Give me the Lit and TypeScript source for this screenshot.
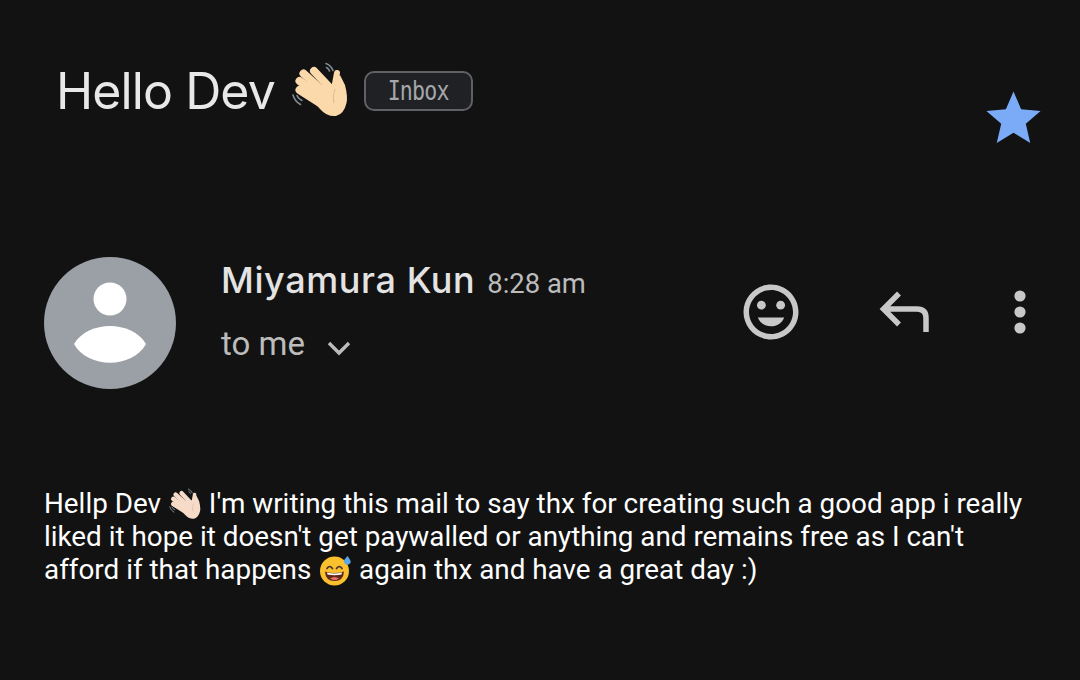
import { LitElement, html, css, svg } from "lit";
import { customElement } from "lit/decorators.js";

const hand = (skin: string, crease: string, wave: string) => svg`
  <g fill="none" stroke-linecap="round">
    <path d="M36 3.5 Q41 5.5 43 10.5" stroke="${wave}" stroke-width="1.6"/>
    <path d="M36.5 7.5 Q38.5 8.5 39.5 11" stroke="${wave}" stroke-width="1.6"/>
    <path d="M3 35 Q4.5 41 10.5 44.5" stroke="${wave}" stroke-width="1.6"/>
    <path d="M7 35.5 Q8 38.5 12 40.5" stroke="${wave}" stroke-width="1.6"/>
    <g stroke="${skin}" stroke-width="8">
      <path d="M24 11 L41 29"/>
      <path d="M13.5 13.5 L36 34"/>
      <path d="M9.5 21 L32 38"/>
      <path d="M9.5 30 L30 43"/>
      <path d="M47 13 L44 29" stroke-width="6"/>
    </g>
  </g>
  <path d="M26 26 L42 24 L50 15 L55 25 Q58 37 56.5 43 Q54 54 46 56 Q37 57 30 49 L22 40 Z" fill="${skin}"/>
  <path d="M45 29 Q42 36 44 43" fill="none" stroke="${crease}" stroke-width="1"/>
`;

@customElement("app-root")
export class AppRoot extends LitElement {
  static styles = css`
    :host {
      display: block;
      width: 1080px;
      height: 680px;
      background: #121212;
      overflow: hidden;
      font-family: Roboto, sans-serif;
      color: #fff;
    }
    .head {
      display: flex;
      align-items: flex-start;
      padding: 60px 34px 0 56px;
      height: 257px;
      box-sizing: border-box;
    }
    h1 {
      margin: 0;
      font: 400 50px/62px Inter, sans-serif;
      letter-spacing: -0.9px;
      color: #e8e8e8;
    }
    .wave {
      width: 60px;
      height: 60px;
      margin: 0 14px 0 15px;
      flex: none;
    }
    .badge {
      margin-top: 11px;
      width: 109px;
      height: 40px;
      box-sizing: border-box;
      border: 2px solid #5f6165;
      border-radius: 10px;
      background: #202124;
      display: flex;
      align-items: center;
      justify-content: center;
    }
    .badge span {
      display: block;
      color: #a5a7aa;
      font: 400 27px/34px "DejaVu Sans Mono", monospace;
      letter-spacing: -1px;
      transform: scaleX(0.8);
    }
    .star {
      margin: 26px 0 0 auto;
      width: 65px;
      height: 65px;
      flex: none;
    }
    .sender {
      display: flex;
      align-items: flex-start;
      padding: 0 50px 0 44px;
      height: 230px;
      box-sizing: border-box;
    }
    .avatar {
      width: 132px;
      height: 132px;
      flex: none;
    }
    .who {
      margin: 0 0 0 45px;
      flex: 1;
    }
    .line1 {
      display: flex;
      align-items: baseline;
      gap: 12px;
      height: 46px;
    }
    .name {
      font: 500 36px/46px Inter, sans-serif;
      letter-spacing: 0.6px;
      color: #e3e3e3;
    }
    .time {
      font: 400 27.4px/46px Roboto, sans-serif;
      color: #bcbcbc;
    }
    .line2 {
      display: flex;
      align-items: center;
      height: 40px;
      margin-top: 21px;
      color: #bcbcbc;
      font: 400 33px/40px Roboto, sans-serif;
    }
    .chev {
      width: 36px;
      height: 36px;
      margin: 6px 0 0 16px;
    }
    .actions {
      display: flex;
      align-items: flex-start;
      margin-top: 22px;
    }
    .actions svg {
      display: block;
      flex: none;
    }
    .smile { width: 66px; height: 66px; }
    .reply { width: 60px; height: 66px; margin-left: 74px; }
    .dots { width: 20px; height: 66px; margin-left: 72px; }
    .body {
      margin: 0;
      padding: 0 44px;
      font: 400 27.83px/33px Roboto, sans-serif;
      color: #fff;
    }
    .emo {
      display: inline-block;
      width: 34px;
      height: 34px;
      margin: -6px 0;
      vertical-align: -2px;
    }
  `;

  render() {
    return html`
      <div class="head">
        <h1>Hello Dev</h1>
        <svg class="wave" viewBox="0 0 60 60" role="img" aria-label="👋">
          ${hand("#fbd9ab", "#e3b988", "#7f8a92")}
        </svg>
        <div class="badge"><span>Inbox</span></div>
        <svg class="star" viewBox="0 0 24 24">
          <path fill="#7baaf7" d="M12 17.27L18.18 21l-1.64-7.03L22 9.24l-7.19-.61L12 2 9.19 8.63 2 9.24l5.46 4.73L5.82 21z"/>
        </svg>
      </div>
      <div class="sender">
        <svg class="avatar" viewBox="0 0 132 132">
          <circle cx="66" cy="66" r="66" fill="#9aa0a6"/>
          <circle cx="66" cy="42" r="16.5" fill="#fff"/>
          <path d="M30 87 C44 63 88 63 102 87 C88 112 44 112 30 87Z" fill="#fff"/>
        </svg>
        <div class="who">
          <div class="line1">
            <span class="name">Miyamura Kun</span>
            <span class="time">8:28 am</span>
          </div>
          <div class="line2">
            <span>to me</span>
            <svg class="chev" viewBox="0 0 36 36">
              <path d="M8 14 L18 24 L28 14" fill="none" stroke="#bcbcbc" stroke-width="3.4"/>
            </svg>
          </div>
        </div>
        <div class="actions">
          <svg class="smile" viewBox="0 0 24 24">
            <path fill="#c8c8c8" d="M11.99 2C6.47 2 2 6.48 2 12s4.47 10 9.99 10C17.52 22 22 17.52 22 12S17.52 2 11.99 2zM12 20c-4.42 0-8-3.58-8-8s3.58-8 8-8 8 3.58 8 8-3.58 8-8 8z"/>
            <circle cx="8.5" cy="9.5" r="1.6" fill="#c8c8c8"/>
            <circle cx="15.5" cy="9.5" r="1.6" fill="#c8c8c8"/>
            <path fill="#c8c8c8" d="M7.2 14h9.6c-.8 2-2.6 3.2-4.8 3.2S8 16 7.2 14z"/>
          </svg>
          <svg class="reply" viewBox="0 0 60 66">
            <path d="M21 14.5 L5.5 30 L21 45.5 M5.5 30 H39 Q48 30 48 39 V53" fill="none" stroke="#c8c8c8" stroke-width="5.5"/>
          </svg>
          <svg class="dots" viewBox="0 0 20 66">
            <circle cx="10" cy="17" r="5.6" fill="#c8c8c8"/>
            <circle cx="10" cy="33" r="5.6" fill="#c8c8c8"/>
            <circle cx="10" cy="49" r="5.6" fill="#c8c8c8"/>
          </svg>
        </div>
      </div>
      <p class="body">Hellp Dev <svg class="emo" viewBox="0 0 60 60" role="img" aria-label="👋">${hand("#f6dcc8", "#d9b99f", "#8b949b")}</svg> I'm writing this mail to say thx for creating such a good app i really liked it hope it doesn't get paywalled or anything and remains free as I can't afford if that happens <svg class="emo" viewBox="0 0 34 34" role="img" aria-label="😅">
          <circle cx="16.5" cy="18" r="14.5" fill="#fbc02d"/>
          <path d="M9 15.5 Q11.5 11.5 14.5 15.5 M18.5 15.5 Q21.5 11.5 24 15.5" fill="none" stroke="#4e342e" stroke-width="1.7" stroke-linecap="round"/>
          <path d="M7 18.5 Q16.5 21.5 26 18.5 Q25.5 28 16.5 28 Q7.5 28 7 18.5Z" fill="#5d2a1a"/>
          <path d="M9 19.5 Q16.5 21.5 24 19.5 L23.5 21.5 Q16.5 23 9.5 21.5Z" fill="#fff"/>
          <path d="M12 25.5 Q16.5 22.5 21 25.5 Q16.5 28.5 12 25.5Z" fill="#ef6c6c"/>
          <path d="M29.5 3 Q33.5 8 32.5 10 Q30.5 12.5 27.5 11.2 Q25 9 26.5 6.5Z" fill="#5aa7e8"/>
        </svg> again thx and have a great day :)</p>
    `;
  }
}
